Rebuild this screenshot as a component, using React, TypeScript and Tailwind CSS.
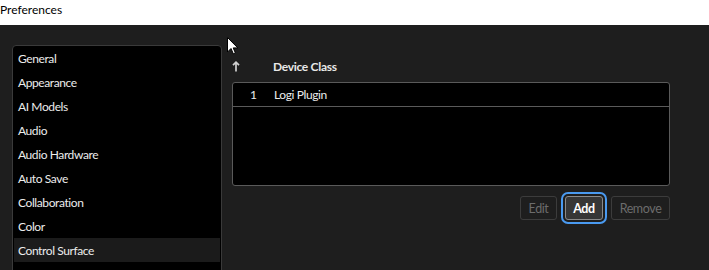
import React from "react";

const items = [
  "General",
  "Appearance",
  "AI Models",
  "Audio",
  "Audio Hardware",
  "Auto Save",
  "Collaboration",
  "Color",
  "Control Surface",
];

export default function App() {
  return (
    <div
      className="relative w-[709px] h-[270px] overflow-hidden bg-[#1e1e1e] text-[12px] tracking-[-0.4px] leading-none"
      style={{ fontFamily: "Lato, 'Noto Sans', sans-serif" }}
    >
      <div className="h-[25px] bg-white text-black text-[12px] tracking-normal flex items-start pt-[4px] pl-0">
        <span>Preferences</span>
      </div>
      <div className="flex pt-[20px] pl-[12px]">
        <div className="w-[210px] h-[240px] shrink-0 border border-[#3a3a3a] rounded-[4px] bg-black px-[1px]">
          {items.map((it) => (
            <div
              key={it}
              className={`h-[24px] flex items-center pl-[4px] pt-[2px] text-[#ececec] ${
                it === "Control Surface" ? "bg-[#1b1b1b]" : ""
              }`}
            >
              {it}
            </div>
          ))}
        </div>
        <div className="ml-[10px] w-[438px] pt-[10px]">
          <div className="h-[22px] flex items-center">
            <div className="w-[41px] flex items-center">
              <svg width="8" height="11" viewBox="0 0 8 11">
                <path d="M4 1.2 V10.5 M1 4.2 L4 1.2 L7 4.2" stroke="#d0d0d0" strokeWidth="1.7" fill="none" />
              </svg>
            </div>
            <span className="font-bold tracking-[-0.3px] text-[#e8e8e8] pt-[1px]">Device Class</span>
          </div>
          <div className="mt-[5px] h-[104px] border border-[#5a5a5a] rounded-[3px] bg-black">
            <div className="h-[24px] border-b border-[#5a5a5a] flex items-center pt-[1px] text-[#ececec]">
              <span className="w-[41px] pl-[17px]">1</span>
              <span>Logi Plugin</span>
            </div>
          </div>
          <div className="mt-[10px] flex justify-end gap-[8px]">
            <button className="w-[37px] h-[24px] pt-[2px] border border-[#3c3c3c] rounded-[3px] text-[#6c6c6c] text-[12.5px]">
              Edit
            </button>
            <button className="w-[38px] h-[24px] pt-[2px] border border-[#8a8a8a] bg-[#363636] rounded-[3px] text-white font-bold text-[12.5px] outline-2 outline-offset-2 outline-[#4a9af0] outline-solid">
              Add
            </button>
            <button className="w-[59px] h-[24px] pt-[2px] border border-[#3c3c3c] rounded-[3px] text-[#6c6c6c] text-[12.5px]">
              Remove
            </button>
          </div>
        </div>
      </div>
      <svg
        className="absolute left-[227px] top-[37px]"
        width="12"
        height="18"
        viewBox="0 0 12 18"
      >
        <path
          d="M0.5 0.5 L0.5 15 L4 11.5 L6.3 16.8 L8.4 15.9 L6.2 10.9 L10.8 10.9 Z"
          fill="white"
          stroke="black"
          strokeWidth="1"
        />
      </svg>
    </div>
  );
}
